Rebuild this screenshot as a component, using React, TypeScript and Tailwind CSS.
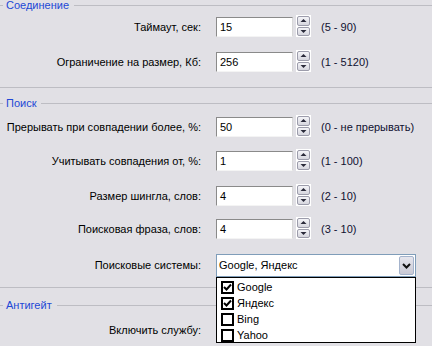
import React from "react";

const font = "font-['Liberation_Sans',Arial,sans-serif]";

function GroupTitle({ title, className = "" }: { title: string; className?: string }) {
  return (
    <div className={`flex items-center h-[11px] ${className}`}>
      <div className="w-[3px] h-px bg-[#bdbdc3]" />
      <span className="ml-[3px] mr-[5px] text-[#2148d6] leading-[11px]">{title}</span>
      <div className="flex-1 h-px bg-[#bdbdc3]" />
    </div>
  );
}

function Spinner() {
  return (
    <div className="ml-[3px] self-end w-[15px] h-[22px] bg-white flex flex-col gap-px p-px">
      <div className="flex-1 border border-[#9c9cab] rounded-[2px] bg-gradient-to-b from-[#f4f4f8] to-[#d6d6de] flex items-center justify-center">
        <svg width="7" height="5" viewBox="0 0 7 5">
          <path d="M0.5 4 L3.5 1 L6.5 4 Z" fill="#2a2a3a" />
        </svg>
      </div>
      <div className="flex-1 border border-[#9c9cab] rounded-[2px] bg-gradient-to-b from-[#f4f4f8] to-[#d6d6de] flex items-center justify-center">
        <svg width="7" height="5" viewBox="0 0 7 5">
          <path d="M0.5 1 L3.5 4 L6.5 1 Z" fill="#2a2a3a" />
        </svg>
      </div>
    </div>
  );
}

function SpinRow({
  label,
  value,
  range,
  className = "",
}: {
  label: string;
  value: string;
  range: string;
  className?: string;
}) {
  return (
    <div className={`flex items-center h-[20px] ${className}`}>
      <div className="w-[201px] text-right text-black">{label}</div>
      <div className="ml-[15px] w-[77px] h-[20px] bg-white border-t border-l border-[#8a8a8a] border-r-[#d8d8d8] border-b-[#f4f4f4] border-r border-b flex items-center pl-[3px] text-black">
        {value}
      </div>
      <Spinner />
      <div className="ml-[10px] text-[#101030]">{range}</div>
    </div>
  );
}

function Check({ checked }: { checked: boolean }) {
  return (
    <div className="w-[13px] h-[13px] border-2 border-black bg-white flex items-center justify-center">
      {checked && (
        <svg width="9" height="9" viewBox="0 0 9 9">
          <path d="M1 4 L3.5 6.5 L8 1.5" stroke="#000" strokeWidth="2" fill="none" />
        </svg>
      )}
    </div>
  );
}

const engines = [
  { name: "Google", checked: true },
  { name: "Яндекс", checked: true },
  { name: "Bing", checked: false },
  { name: "Yahoo", checked: false },
];

export default function App() {
  return (
    <div className={`relative w-[432px] h-[346px] overflow-hidden bg-[#e1e0e5] text-[11px] ${font}`}>
      <GroupTitle title="Соединение" />
      <SpinRow className="mt-[6px]" label="Таймаут, сек:" value="15" range="(5 - 90)" />
      <SpinRow className="mt-[15px]" label="Ограничение на размер, Кб:" value="256" range="(1 - 5120)" />
      <div className="mt-[15px] h-px bg-[#bdbdc3]" />

      <GroupTitle className="mt-[10px]" title="Поиск" />
      <SpinRow className="mt-[8px]" label="Прерывать при совпадении более, %:" value="50" range="(0 - не прерывать)" />
      <SpinRow className="mt-[14px]" label="Учитывать совпадения от, %:" value="1" range="(1 - 100)" />
      <SpinRow className="mt-[15px]" label="Размер шингла, слов:" value="4" range="(2 - 10)" />
      <SpinRow className="mt-[13px]" label="Поисковая фраза, слов:" value="4" range="(3 - 10)" />

      <div className="mt-[15px] flex items-center">
        <div className="w-[201px] text-right text-black">Поисковые системы:</div>
        <div className="relative ml-[15px] w-[200px] h-[23px] bg-white border border-[#7f9db9] flex items-center pl-[2px] text-black">
          Google, Яндекс
          <div className="absolute right-[1px] top-[1px] bottom-[1px] w-[15px] border border-[#a4b3cc] rounded-[2px] bg-gradient-to-b from-[#e6e6ee] to-[#c9c9d4] flex items-center justify-center">
            <svg width="9" height="6" viewBox="0 0 9 6">
              <path d="M1 1 L4.5 4.5 L8 1" stroke="#111" strokeWidth="2" fill="none" />
            </svg>
          </div>
        </div>
      </div>
      <div className="mt-[10px] h-px bg-[#bdbdc3]" />

      <GroupTitle className="mt-[12px]" title="Антигейт" />
      <div className="mt-[9px] h-[20px] flex items-center">
        <div className="w-[201px] text-right text-black">Включить службу:</div>
      </div>

      <div className="absolute left-[216px] top-[277px] w-[200px] h-[66px] bg-white border border-black pt-px">
        {engines.map((e) => (
          <div key={e.name} className="h-[16px] flex items-center pl-[4px] gap-[3px] text-black">
            <Check checked={e.checked} />
            <span>{e.name}</span>
          </div>
        ))}
      </div>
    </div>
  );
}
